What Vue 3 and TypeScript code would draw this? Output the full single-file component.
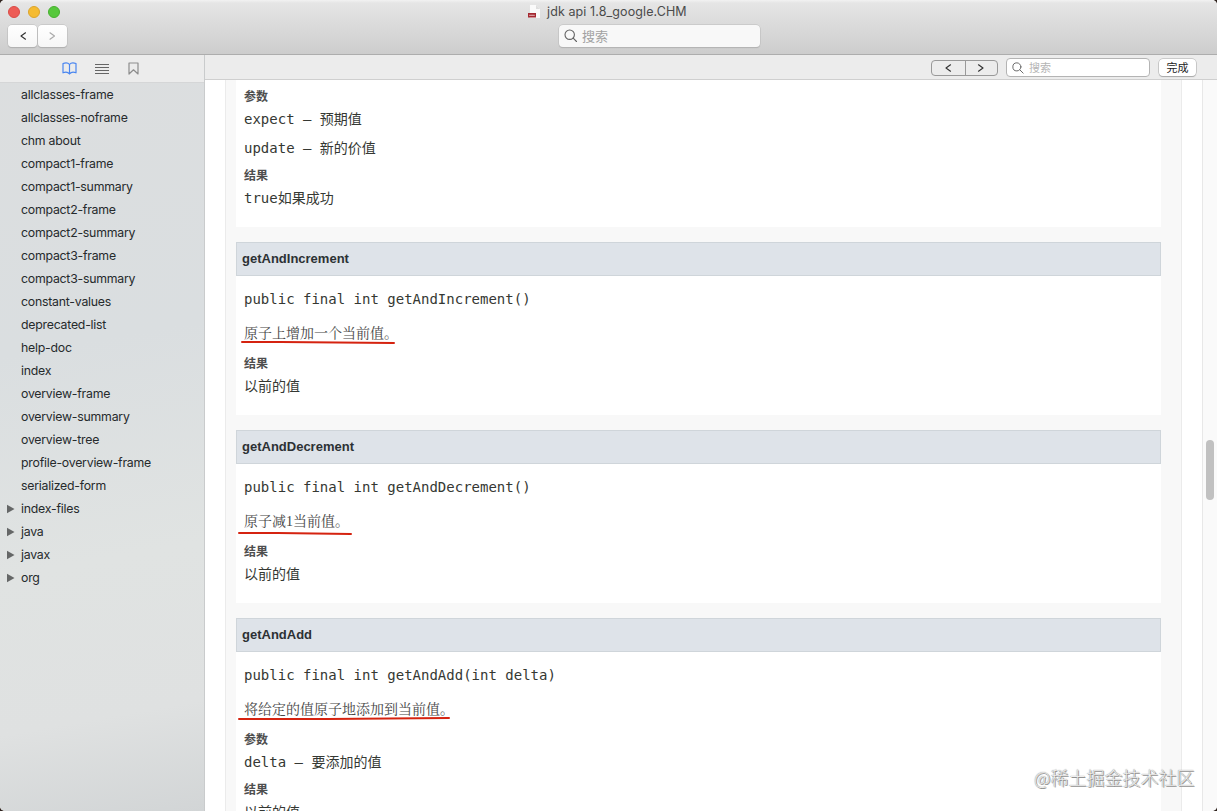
<script setup lang="ts">
interface Row { label: string; folder?: boolean }
interface Block { label: string; items: string[] }
interface Mark { left: number; top: number; width: number; d: string }
interface Method { name: string; signature: string; text: string; mark: Mark; blocks: Block[] }

const rows: Row[] = [
  ...['allclasses-frame', 'allclasses-noframe', 'chm about', 'compact1-frame', 'compact1-summary',
    'compact2-frame', 'compact2-summary', 'compact3-frame', 'compact3-summary', 'constant-values',
    'deprecated-list', 'help-doc', 'index', 'overview-frame', 'overview-summary', 'overview-tree',
    'profile-overview-frame', 'serialized-form'].map((label) => ({ label })),
  ...['index-files', 'java', 'javax', 'org'].map((label) => ({ label, folder: true })),
]

const firstBlocks: Block[] = [
  { label: '参数', items: ['expect – 预期值', 'update – 新的价值'] },
  { label: '结果', items: ['true如果成功'] },
]

const methods: Method[] = [
  {
    name: 'getAndIncrement', signature: 'public final int getAndIncrement()', text: '原子上增加一个当前值。',
    mark: { left: -3, top: 16, width: 156, d: 'M1 2 L40 2 L153 3' },
    blocks: [{ label: '结果', items: ['以前的值'] }],
  },
  {
    name: 'getAndDecrement', signature: 'public final int getAndDecrement()', text: '原子减1当前值。',
    mark: { left: -6, top: 19, width: 116, d: 'M1 2 L40 2 L113 3' },
    blocks: [{ label: '结果', items: ['以前的值'] }],
  },
  {
    name: 'getAndAdd', signature: 'public final int getAndAdd(int delta)', text: '将给定的值原子地添加到当前值。',
    mark: { left: -6, top: 16, width: 214, d: 'M1 3 L90 3 L211 2' },
    blocks: [{ label: '参数', items: ['delta – 要添加的值'] }, { label: '结果', items: ['以前的值'] }],
  },
]
</script>

<template>
  <div class="window">
    <header class="titlebar">
      <div class="title-row">
        <div class="lights"><i class="red" /><i class="yellow" /><i class="green" /></div>
        <div class="title">
          <svg width="13" height="14" viewBox="0 0 13 14">
            <path d="M2 0h6l4 4v9H2z" fill="#fafafa" />
            <path d="M8 0v4h4z" fill="#dedede" />
            <rect x="0" y="8" width="8" height="4.5" fill="#a52a32" />
            <path d="M1.5 10.3h5" stroke="#e4b5b8" stroke-width="1" stroke-dasharray="1.3 .5" />
          </svg>
          <span>jdk api 1.8_google.CHM</span>
        </div>
      </div>
      <div class="tool-row">
        <div class="nav">
          <button><svg width="8" height="10" viewBox="0 0 8 10"><path d="M6.5 1.8 2 5l4.5 3.2" /></svg></button>
          <button class="off"><svg width="8" height="10" viewBox="0 0 8 10"><path d="M1 1.800 5.500 5l-4.500 3.200" /></svg></button>
        </div>
        <div class="search main-search">
          <svg width="14" height="14" viewBox="0 0 14 14"><circle cx="5.700" cy="5.700" r="4.700" /><path d="m9.200 9.200 3.300 3.300" /></svg>
          <span>搜索</span>
        </div>
      </div>
    </header>
    <div class="body">
      <aside class="sidebar">
        <div class="tabs">
          <svg class="book" width="15" height="13" viewBox="0 0 15 13"><path d="M7.500 2.500C6 .5 3 .7 1 1.500v9.300c2-.8 5-.8 6.500 1.200 1.500-2 4.500-2 6.500-1.200V1.500C12 .7 9 .5 7.500 2.500v9.300" /></svg>
          <svg class="list" width="14" height="12" viewBox="0 0 14 12"><path d="M0 1.500h14M0 4.500h14M0 7.500h14M0 10.500h14" /></svg>
          <svg class="ribbon" width="11" height="13" viewBox="0 0 11 13"><path d="M1 1h9v11L5.500 7.800 1 12z" /></svg>
        </div>
        <ul>
          <li v-for="row in rows" :key="row.label">
            <svg v-if="row.folder" width="8" height="10" viewBox="0 0 8 10"><path d="M0 .8 7.500 5 0 9.200z" fill="#656767" /></svg>
            <span>{{ row.label }}</span>
          </li>
        </ul>
      </aside>
      <main>
        <div class="findbar">
          <div class="segments">
            <span><svg width="8" height="10" viewBox="0 0 8 10"><path d="M6.500 1.800 2 5l4.500 3.200" /></svg></span>
            <span><svg width="8" height="10" viewBox="0 0 8 10"><path d="M1.500 1.800 6 5l-4.500 3.200" /></svg></span>
          </div>
          <div class="search find-search">
            <svg width="12" height="12" viewBox="0 0 14 14"><circle cx="5.700" cy="5.700" r="4.700" /><path d="m9.200 9.200 3.800 3.800" /></svg>
            <span>搜索</span>
          </div>
          <button class="done">完成</button>
        </div>
        <div class="viewport">
          <div class="page">
            <section class="card lead">
              <dl v-for="b in firstBlocks" :key="b.label">
                <dt>{{ b.label }}</dt>
                <dd v-for="item in b.items" :key="item">{{ item }}</dd>
              </dl>
            </section>
            <section v-for="m in methods" :key="m.name" class="card">
              <h4>{{ m.name }}</h4>
              <pre>{{ m.signature }}</pre>
              <div class="desc">
                {{ m.text }}
                <svg class="mark" :width="m.mark.width" height="5" :style="{ left: m.mark.left + 'px', top: m.mark.top + 'px' }"><path :d="m.mark.d" /></svg>
              </div>
              <dl v-for="b in m.blocks" :key="b.label">
                <dt>{{ b.label }}</dt>
                <dd v-for="item in b.items" :key="item">{{ item }}</dd>
              </dl>
            </section>
          </div>
          <div class="scrollbar"><div class="thumb" /></div>
        </div>
      </main>
    </div>
    <div class="watermark">@稀土掘金技术社区</div>
  </div>
</template>

<style>
html, body { margin: 0; background: #30241f; overflow: hidden; }
</style>

<style scoped>
* { box-sizing: border-box; }
.window { position: relative; width: 1217px; height: 811px; display: flex; flex-direction: column; overflow: hidden; border-radius: 5px; background: #fff; font-family: Inter, "Noto Sans CJK SC", sans-serif; }
button { font: inherit; padding: 0; border: 0; }
svg { flex: none; display: block; }
path, circle { stroke-linecap: round; stroke-linejoin: round; }
.titlebar { height: 55px; flex: none; background: linear-gradient(#f2f2f2 0, #e5e5e5 3px, #cdcdcd 100%); border-bottom: 1px solid #adadad; }
.title-row { display: grid; grid-template-columns: 528px 1fr; height: 23px; align-items: center; }
.lights { display: flex; gap: 8px; padding-left: 8px; }
.lights i { width: 12px; height: 12px; border-radius: 50%; }
.red { background: #ed5c56; border: 1px solid #d94c47; }
.yellow { background: #f5bb31; border: 1px solid #dca42b; }
.green { background: #56c83c; border: 1px solid #46b02f; }
.title { display: flex; align-items: center; gap: 6px; color: #4b4b4b; font-size: 12.5px; letter-spacing: .1px; white-space: nowrap; }
.tool-row { display: grid; grid-template-columns: 551px 201px; align-items: center; padding: 2px 0 0 8px; }
.nav { display: flex; gap: 1px; }
.nav button { width: 29px; height: 22px; border-radius: 4px; background: linear-gradient(#fff, #f6f6f6); box-shadow: 0 0 0 .5px #b9b9b9, 0 1px 1px #a6a6a6; display: grid; place-items: center; }
.nav path, .segments path { fill: none; stroke: #333; stroke-width: 1.200; }
.nav .off path { stroke: #aaa; }
.search { display: flex; align-items: center; border-radius: 4px; }
.search circle, .search path { fill: none; stroke: #626262; stroke-width: 1.100; }
.main-search { height: 22px; background: #f8f8f8; box-shadow: 0 0 0 .5px #bbb, 0 1px 1px #aaa; padding-left: 5px; gap: 4px; color: #a2a2a2; font-size: 13px; line-height: 20px; }
.main-search span { margin-top: -1px; }
.body { flex: 1; display: flex; min-height: 0; }
.sidebar { width: 205px; flex: none; border-right: 1px solid #c9cbcc; background: linear-gradient(170deg, #dcdedf 0, #dadee0 38%, #e0e3e2 66%, #dfe1e1 86%, #d2d5d6 100%); }
.tabs { height: 28px; background: #ececec; border-bottom: 1px solid #d5d6d7; display: flex; align-items: center; padding-left: 62px; }
.tabs path { fill: none; stroke: #777; stroke-width: 1.200; }
.tabs .book path { stroke: #4a86f0; }
.list { margin-left: 18px; }
.list path { stroke-width: 1; stroke-linecap: butt; stroke: #666; }
.ribbon { margin-left: 19px; }
.tabs .ribbon path { stroke: #8d8d8d; }
ul { list-style: none; margin: 0; padding: 0; }
li { display: grid; grid-template-columns: 14px 1fr; height: 23px; align-items: center; padding-left: 7px; font-size: 12.300px; letter-spacing: -.23px; color: #262a2c; white-space: nowrap; }
li span { grid-column: 2; }
li svg { grid-column: 1; grid-row: 1; }
main { flex: 1; min-width: 0; display: flex; flex-direction: column; }
.findbar { height: 25px; flex: none; background: #ececec; border-bottom: 1px solid #cfcfcf; display: flex; align-items: center; padding: 1px 0 0 726px; }
.segments { width: 67px; height: 16px; display: grid; grid-template-columns: 1fr 1fr; border: 1px solid #999; border-radius: 4px; }
.segments span { display: grid; place-items: center; }
.segments span + span { border-left: 1px solid #999; }
.find-search { margin-left: 8px; width: 144px; height: 19px; background: #fff; border: 1px solid #b4b4b4; padding-left: 5px; gap: 5px; font-size: 11px; line-height: 17px; color: #b5b5b5; }
.find-search span { margin-top: 1px; }
.done { margin-left: 9px; width: 37px; height: 17px; border-radius: 4px; background: #fff; box-shadow: 0 0 0 .5px #aaa, 0 1px 1px #aaa; font-size: 11px; line-height: 17px; padding-top: 1px; color: #222; }
.viewport { flex: 1; min-height: 0; display: flex; overflow: hidden; }
.page { margin-left: 20px; width: 957px; flex: none; background: #f8f8f8; border: solid #ebebeb; border-width: 0 1px; padding: 0 20px 0 10px; display: flex; flex-direction: column; gap: 15px; }
.card { background: #fff; height: 173px; flex: none; }
.card:last-child { height: 240px; }
.lead { height: 147px; padding-top: 9px; }
h4 { margin: 0; height: 34px; border: 1px solid #cfd5da; background: #dee3e9; padding-left: 5px; font: bold 13px/32px "Liberation Sans", sans-serif; color: #2c3134; }
pre, dd { margin: 0; font: 14px/20px "DejaVu Sans Mono", "Noto Sans CJK SC", monospace; color: #353833; }
pre { padding: 13px 0 0 8px; }
.desc { position: relative; margin: 15px 0 12px 8px; height: 20px; font: 14px/20px "Liberation Serif", "Noto Serif CJK SC", "Noto Sans CJK SC", serif; color: #474747; white-space: nowrap; }
.mark { position: absolute; }
.mark path { fill: none; stroke: #d52310; stroke-width: 2; }
dl { margin: 0 0 0 8px; }
dl + dl { margin-top: 10px; }
dt { height: 16px; margin-bottom: 4px; font: bold 12px/16px "Liberation Sans", "Noto Sans CJK SC", sans-serif; color: #4e4e4e; }
dd { height: 20px; white-space: nowrap; }
dd + dd { margin-top: 9px; }
.scrollbar { margin-left: 20px; width: 15px; background: #fafafa; border-left: 1px solid #e8e8e8; padding: 360px 0 0 3px; }
.thumb { width: 8px; height: 60px; border-radius: 4px; background: #c1c1c1; }
.watermark { position: absolute; left: 1034px; top: 764px; font: 300 18px/26px "Noto Sans CJK SC", sans-serif; color: #eee; text-shadow: 0 0 1px #666, 1px 1px 0 #999; white-space: nowrap; }
</style>
